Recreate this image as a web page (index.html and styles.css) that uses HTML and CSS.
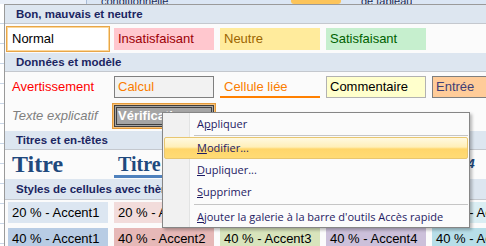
FILE: index.html
```html
<!DOCTYPE html>
<html lang="fr">
<head>
<meta charset="utf-8">
<title>Styles de cellules</title>
<link rel="stylesheet" href="styles.css">
</head>
<body>
<div class="ribbon">
  <div class="rb-btn rb-a"></div>
  <div class="rb-text rb-b">conditionnelle</div>
  <div class="rb-btn rb-hot"></div>
  <div class="rb-text rb-c">de tableau</div>
</div>
<div class="main">
  <div class="sheet-edge"></div>
  <div class="gallery">
    <div class="hdr">Bon, mauvais et neutre</div>
    <div class="row">
      <div class="cell c-normal">Normal</div>
      <div class="cell c-bad">Insatisfaisant</div>
      <div class="cell c-neutral">Neutre</div>
      <div class="cell c-good">Satisfaisant</div>
    </div>
    <div class="hdr">Données et modèle</div>
    <div class="row">
      <div class="cell c-warn">Avertissement</div>
      <div class="cell c-calc">Calcul</div>
      <div class="cell c-linked">Cellule liée</div>
      <div class="cell c-note">Commentaire</div>
      <div class="cell c-input">Entrée</div>
    </div>
    <div class="row row-b">
      <div class="cell c-expl">Texte explicatif</div>
      <div class="cell c-check-wrap"><div class="c-check">Vérification</div></div>
      <div class="cell"></div>
      <div class="cell"></div>
      <div class="cell"></div>
    </div>
    <div class="hdr">Titres et en-têtes</div>
    <div class="row row-t">
      <div class="cell c-title">Titre</div>
      <div class="cell c-h1">Titre 1</div>
      <div class="cell c-h2">Titre 2</div>
      <div class="cell c-h3">Titre 3</div>
      <div class="cell c-h4">Titre 4</div>
    </div>
    <div class="hdr hdr-tall">Styles de cellules avec thème</div>
    <div class="row row-a">
      <div class="cell a20-1">20 % - Accent1</div>
      <div class="cell a20-2">20 % - Accent2</div>
      <div class="cell a20-3">20 % - Accent3</div>
      <div class="cell a20-4">20 % - Accent4</div>
      <div class="cell a20-5">20 % - Accent5</div>
    </div>
    <div class="row row-a">
      <div class="cell a40-1">40 % - Accent1</div>
      <div class="cell a40-2">40 % - Accent2</div>
      <div class="cell a40-3">40 % - Accent3</div>
      <div class="cell a40-4">40 % - Accent4</div>
      <div class="cell a40-5">40 % - Accent5</div>
    </div>
  </div>
</div>
<div class="menu">
  <div class="mi mi-first">A<u>p</u>pliquer</div>
  <div class="msep"></div>
  <div class="mi hot"><u>M</u>odifier...</div>
  <div class="mi"><u>D</u>upliquer...</div>
  <div class="mi"><u>S</u>upprimer</div>
  <div class="msep"></div>
  <div class="mi mi-last"><u>A</u>jouter la galerie à la barre d'outils Accès rapide</div>
</div>
</body>
</html>
```
FILE: styles.css
```css
html, body {
  margin: 0;
  padding: 0;
}
body {
  width: 486px;
  height: 246px;
  overflow: hidden;
  position: relative;
  background: #ffffff;
  font-family: "Liberation Sans", Arial, sans-serif;
}
.ribbon {
  height: 4px;
  background: #dbe6f4;
  position: relative;
  overflow: hidden;
  display: flex;
}
.rb-btn { height: 4px; }
.rb-a {
  width: 86px;
  background: #e9eff8;
  border-right: 1px solid #a9bcd6;
}
.rb-text {
  font-size: 11px;
  color: #1a2a55;
  overflow: hidden;
  white-space: nowrap;
}
.rb-b { width: 190px; padding-left: 14px; line-height: 2px; }
.rb-hot {
  width: 50px;
  background: #fcc45a;
  border-radius: 0 0 3px 3px;
  margin-right: 8px;
}
.rb-c { line-height: 2px; padding-left: 12px; }

.main {
  display: flex;
  height: 242px;
}
.sheet-edge {
  width: 4px;
  flex: none;
  background: repeating-linear-gradient(to bottom, #ffffff 0, #ffffff 19px, #c8d5e6 19px, #c8d5e6 20px);
}
.gallery {
  flex: none;
  width: 620px;
  border-left: 1px solid #9a9a9a;
  border-top: 1px solid #9a9a9a;
  background: #fbfbfb;
  overflow: hidden;
}
.hdr {
  height: 18px;
  line-height: 18px;
  background: #dde6f0;
  border-bottom: 1px solid #c4c8ce;
  padding-left: 11px;
  font-family: "Liberation Sans", Arial, sans-serif;
  font-weight: bold;
  font-size: 11.5px;
  color: #1b2561;
}
.hdr-tall { height: 20px; line-height: 20px; }
.row {
  display: flex;
  gap: 6px;
  padding: 4px 0 3px 3px;
}
.row-b { padding: 4px 0 4px 3px; }
.row-t { padding: 0 0 1px 3px; height: 28px; }
.row-a { padding: 2px 0 3px 3px; }
.cell {
  flex: none;
  width: 100px;
  height: 22px;
  line-height: 22px;
  box-sizing: border-box;
  padding-left: 4px;
  font-size: 13px;
  white-space: nowrap;
  overflow: hidden;
  color: #000;
}
.c-normal {
  background: #fff;
  outline: 1px solid #e8a648;
  outline-offset: 1px;
  box-shadow: 0 0 0 1px #fbd79b;
}
.c-bad { background: #ffc7ce; color: #9c0006; }
.c-neutral { background: #ffeb9c; color: #9c6500; }
.c-good { background: #c6efce; color: #006100; }
.c-warn { color: #ff0000; }
.c-calc {
  background: #f2f2f2;
  border: 1px solid #7f7f7f;
  color: #fa7d00;
  line-height: 20px;
  padding-left: 3px;
}
.c-linked {
  color: #fa7d00;
  border-bottom: 2px solid #ff8001;
}
.c-note {
  background: #ffffcc;
  border: 1px solid #b2b2b2;
  line-height: 20px;
  padding-left: 3px;
}
.c-input {
  background: #ffcc99;
  border: 1px solid #7f7f7f;
  color: #3f3f76;
  line-height: 20px;
  padding-left: 3px;
}
.c-expl { color: #7f7f7f; font-style: italic; }
.c-check-wrap {
  padding: 0;
  outline: 1px solid #e39a3b;
  outline-offset: 1px;
  box-shadow: 0 0 0 1px #f7c27a;
}
.c-check {
  height: 100%;
  box-sizing: border-box;
  background: #a5a5a5;
  border: 3px double #3f3f3f;
  color: #fff;
  font-weight: bold;
  line-height: 16px;
  padding-left: 1px;
}
.row-t .cell {
  height: 28px;
  line-height: 28px;
  color: #1f497d;
  font-weight: bold;
}
.c-title {
  font-family: "Liberation Serif", "Times New Roman", serif;
  font-size: 24px;
  padding-left: 4px;
}
.c-h1 {
  font-family: "Liberation Serif", "Times New Roman", serif;
  font-size: 20px;
  border-bottom: 3px solid #4f81bd;
}
.c-h2, .c-h3, .c-h4 {
  font-size: 13px;
  font-style: italic;
}
.row-a .cell { height: 21px; line-height: 21px; }
.a20-1 { background: #dce6f1; }
.a20-2 { background: #f2dcdb; }
.a20-3 { background: #ebf1de; }
.a20-4 { background: #e4dfec; }
.a20-5 { background: #daeef3; }
.a40-1 { background: #b8cce4; }
.a40-2 { background: #e6b8b7; }
.a40-3 { background: #d8e4bc; }
.a40-4 { background: #ccc0da; }
.a40-5 { background: #b7dee8; }

.menu {
  position: absolute;
  left: 162px;
  top: 112px;
  width: 304px;
  padding: 1px 1px 0;
  background: linear-gradient(to right, #f1f1f1 0, #f1f1f1 26px, #e2e3e3 26px, #e2e3e3 27px, #fbfbfb 27px);
  border: 1px solid #868686;
  box-shadow: 2px 2px 3px rgba(0, 0, 0, 0.28);
  font-family: "Open Sans", "Noto Sans", sans-serif;
  font-size: 11px;
  color: #1e1a63;
}
.mi {
  height: 22px;
  line-height: 22px;
  padding-left: 33px;
  white-space: nowrap;
  box-sizing: border-box;
}
.mi-first { height: 20px; line-height: 20px; }
.mi-last { height: 21px; line-height: 21px; }
.mi.hot {
  background: linear-gradient(to bottom, #fff9e1 0%, #ffefb8 45%, #ffd66b 55%, #ffdb75 100%);
  border: 1px solid #e8c670;
  border-radius: 2px;
  line-height: 20px;
  padding-left: 32px;
}
.msep {
  height: 3px;
  margin-left: 30px;
  background: linear-gradient(to bottom, transparent 1px, #c5c5c5 1px, #c5c5c5 2px, transparent 2px);
}
```
